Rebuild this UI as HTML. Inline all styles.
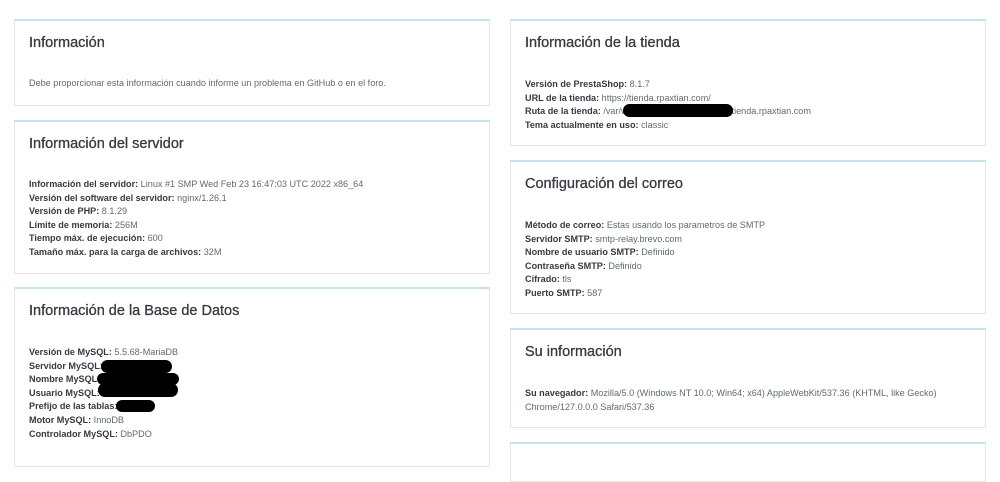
<!DOCTYPE html>
<html><head><meta charset="utf-8"><style>
body{margin:0;width:1000px;height:450px;overflow:hidden;background:#fff;font-family:"Liberation Sans",sans-serif;position:relative}
.p{position:absolute;border:1px solid #e2e6e8;border-top:2px solid #c4e3ee;background:#fff;box-sizing:border-box}
.t{position:absolute;left:14px;font-size:14.5px;color:#363a41;line-height:18px;-webkit-text-stroke:0.3px #363a41}
.b{position:absolute;left:14px;font-size:9.1px;line-height:13.6px;color:#5f6b70;white-space:nowrap}
.b b{color:#363a41}
.k{position:absolute;background:#000;border-radius:8px}
</style></head><body>
<div class="p" style="left:14px;top:19px;width:476px;height:87px">
<div class="t" style="top:13px">Información</div>
<div class="b" style="top:56px">Debe proporcionar esta información cuando informe un problema en GitHub o en el foro.</div></div>
<div class="p" style="left:14px;top:120px;width:476px;height:154px">
<div class="t" style="top:13px">Información del servidor</div>
<div class="b" style="top:56px"><b>Información del servidor:</b> Linux #1 SMP Wed Feb 23 16:47:03 UTC 2022 x86_64<br><b>Versión del software del servidor:</b> nginx/1.26.1<br><b>Versión de PHP:</b> 8.1.29<br><b>Límite de memoria:</b> 256M<br><b>Tiempo máx. de ejecución:</b> 600<br><b>Tamaño máx. para la carga de archivos:</b> 32M</div></div>
<div class="p" style="left:14px;top:287px;width:476px;height:180px">
<div class="t" style="top:13px">Información de la Base de Datos</div>
<div class="b" style="top:57px"><b>Versión de MySQL:</b> 5.5.68-MariaDB<br><b>Servidor MySQL:</b><br><b>Nombre MySQL:</b><br><b>Usuario MySQL:</b><br><b>Prefijo de las tablas:</b><br><b>Motor MySQL:</b> InnoDB<br><b>Controlador MySQL:</b> DbPDO</div></div>
<div class="k" style="left:101px;top:360px;width:71px;height:13px"></div>
<div class="k" style="left:97px;top:373px;width:82px;height:12px;border-radius:6px"></div>
<div class="k" style="left:98px;top:383px;width:80px;height:14px"></div>
<div class="k" style="left:116px;top:400px;width:39px;height:12px"></div>
<div class="p" style="left:510px;top:19px;width:476px;height:127px">
<div class="t" style="top:13px">Información de la tienda</div>
<div class="b" style="top:57px"><b>Versión de PrestaShop:</b> 8.1.7<br><b>URL de la tienda:</b> https://tienda.rpaxtian.com/<br><b>Ruta de la tienda:</b> /var/w<span style="display:inline-block;width:104px"></span>tienda.rpaxtian.com<br><b>Tema actualmente en uso:</b> classic</div></div>
<div class="k" style="left:623px;top:104px;width:110px;height:13px"></div>
<div class="p" style="left:510px;top:160px;width:476px;height:154px">
<div class="t" style="top:13px">Configuración del correo</div>
<div class="b" style="top:57px"><b>Método de correo:</b> Estas usando los parametros de SMTP<br><b>Servidor SMTP:</b> smtp-relay.brevo.com<br><b>Nombre de usuario SMTP:</b> Definido<br><b>Contraseña SMTP:</b> Definido<br><b>Cifrado:</b> tls<br><b>Puerto SMTP:</b> 587</div></div>
<div class="p" style="left:510px;top:328px;width:476px;height:100px">
<div class="t" style="top:13px">Su información</div>
<div class="b" style="top:57px;white-space:normal;width:446px"><b>Su navegador:</b> Mozilla/5.0 (Windows NT 10.0; Win64; x64) AppleWebKit/537.36 (KHTML, like Gecko) Chrome/127.0.0.0 Safari/537.36</div></div>
<div class="p" style="left:510px;top:442px;width:476px;height:40px"></div>
</body></html>
